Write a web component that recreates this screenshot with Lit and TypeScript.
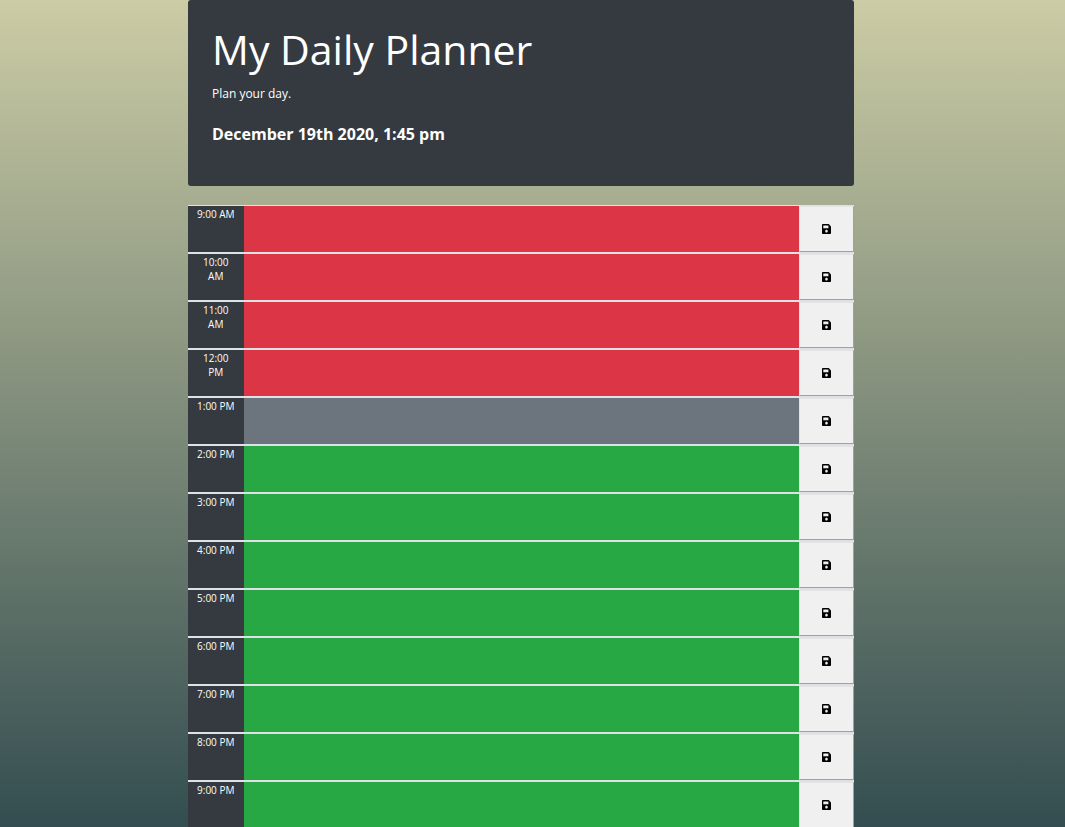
import { LitElement, html, css } from "lit";
import { customElement, property } from "lit/decorators.js";

type Phase = "past" | "present" | "future";

interface Slot {
  label: string;
  phase: Phase;
}

const slots: Slot[] = [
  { label: "9:00 AM", phase: "past" },
  { label: "10:00 AM", phase: "past" },
  { label: "11:00 AM", phase: "past" },
  { label: "12:00 PM", phase: "past" },
  { label: "1:00 PM", phase: "present" },
  { label: "2:00 PM", phase: "future" },
  { label: "3:00 PM", phase: "future" },
  { label: "4:00 PM", phase: "future" },
  { label: "5:00 PM", phase: "future" },
  { label: "6:00 PM", phase: "future" },
  { label: "7:00 PM", phase: "future" },
  { label: "8:00 PM", phase: "future" },
  { label: "9:00 PM", phase: "future" },
];

@customElement("time-block")
export class TimeBlock extends LitElement {
  static styles = css`
    :host {
      display: block;
    }
    .row {
      display: grid;
      grid-template-columns: 1fr 10fr 1fr;
      grid-auto-rows: 46px;
      border-top: 1px solid #dee2e6;
      border-bottom: 1px solid #dee2e6;
    }
    .hour {
      min-width: 0;
      padding: 1px 8px 0;
      background: #343a40;
      color: #fff;
      font-size: 10px;
      line-height: 14px;
      text-align: center;
    }
    .entry {
      box-sizing: border-box;
      width: 100%;
      height: 100%;
      min-width: 0;
      margin: 0;
      padding: 4px 12px;
      border: 0;
      border-radius: 0;
      outline: none;
      resize: none;
      color: #fff;
      font: inherit;
    }
    .past {
      background: #dc3545;
    }
    .present {
      background: #6c757d;
    }
    .future {
      background: #28a745;
    }
    .save {
      display: flex;
      align-items: center;
      justify-content: center;
      min-width: 0;
      margin: 0;
      padding: 0;
      border: 1px solid;
      border-color: #e3e3e3 #a0a0a0 #a0a0a0 #e3e3e3;
      border-radius: 0;
      background: #f0f0f0;
      color: #000;
    }
    .icon {
      display: block;
      width: 9px;
      height: 10px;
      fill: currentColor;
    }
  `;

  @property() label = "";
  @property() phase: Phase = "future";

  render() {
    return html`
      <div class="row">
        <label class="hour" for="entry">${this.label}</label>
        <textarea class="entry ${this.phase}" id="entry" spellcheck="false"></textarea>
        <button class="save" type="button" aria-label="Save ${this.label}">
          <svg class="icon" viewBox="0 32 448 448" preserveAspectRatio="none" aria-hidden="true">
            <path
              d="M433.941 129.941l-83.882-83.882A48 48 0 0 0 316.118 32H48C21.49 32 0 53.49 0 80v352c0 26.51 21.49 48 48 48h352c26.51 0 48-21.49 48-48V163.882a48 48 0 0 0-14.059-33.941zM224 416c-35.346 0-64-28.654-64-64 0-35.346 28.654-64 64-64s64 28.654 64 64c0 35.346-28.654 64-64 64zm96-304.52V212c0 6.627-5.373 12-12 12H76c-6.627 0-12-5.373-12-12V108c0-6.627 5.373-12 12-12h228.52c3.183 0 6.235 1.264 8.485 3.515l3.48 3.48A11.996 11.996 0 0 1 320 111.48z"
            />
          </svg>
        </button>
      </div>
    `;
  }
}

@customElement("app-root")
export class AppRoot extends LitElement {
  static styles = css`
    :host {
      display: block;
      box-sizing: border-box;
      height: 100vh;
      overflow-y: auto;
      scrollbar-width: none;
      padding: 0 211px 0 188px;
      background: linear-gradient(#cccca5, #334d50);
      color: #fff;
      font-family: "Open Sans", "Noto Sans", sans-serif;
      font-size: 12px;
      line-height: 18px;
    }
    .banner {
      margin-bottom: 19px;
      padding: 24px 24px 40px;
      border-radius: 3px;
      background: #343a40;
    }
    h1 {
      margin: 0 0 11px;
      font-size: 41px;
      font-weight: 400;
      line-height: 50px;
    }
    p {
      margin: 0 0 19px;
    }
    h2 {
      margin: 0;
      font-size: 16px;
      font-weight: 700;
      line-height: 24px;
    }
  `;

  render() {
    return html`
      <header class="banner">
        <h1>My Daily Planner</h1>
        <p>Plan your day.</p>
        <h2>December 19th 2020, 1:45 pm</h2>
      </header>
      <main>
        ${slots.map((s) => html`<time-block .label=${s.label} .phase=${s.phase}></time-block>`)}
      </main>
    `;
  }
}
